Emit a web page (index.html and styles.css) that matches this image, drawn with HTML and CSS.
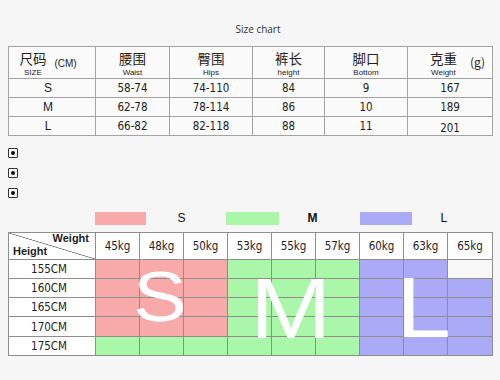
FILE: index.html
```html
<!DOCTYPE html>
<html lang="zh">
<head>
<meta charset="utf-8">
<title>Size chart</title>
<link rel="stylesheet" href="styles.css">
</head>
<body>
<div class="page">
  <div class="title">Size chart</div>

  <div class="size-table">
    <div class="cell head first">
      <div class="stack"><span class="zh">尺码</span><span class="en">SIZE</span></div>
      <span class="unit">(CM)</span>
    </div>
    <div class="cell head"><div class="stack"><span class="zh">腰围</span><span class="en">Waist</span></div></div>
    <div class="cell head"><div class="stack"><span class="zh">臀围</span><span class="en">Hips</span></div></div>
    <div class="cell head"><div class="stack"><span class="zh">裤长</span><span class="en">height</span></div></div>
    <div class="cell head"><div class="stack"><span class="zh">脚口</span><span class="en">Bottom</span></div></div>
    <div class="cell head last">
      <div class="stack"><span class="zh">克重</span><span class="en">Weight</span></div>
      <span class="unit">(g)</span>
    </div>

    <div class="cell size">S</div><div class="cell">58-74</div><div class="cell">74-110</div><div class="cell">84</div><div class="cell">9</div><div class="cell">167</div>
    <div class="cell size">M</div><div class="cell">62-78</div><div class="cell">78-114</div><div class="cell">86</div><div class="cell">10</div><div class="cell">189</div>
    <div class="cell size">L</div><div class="cell">66-82</div><div class="cell">82-118</div><div class="cell">88</div><div class="cell">11</div><div class="cell low">201</div>
  </div>

  <div class="marks">
    <span class="mark"></span>
    <span class="mark"></span>
    <span class="mark"></span>
  </div>

  <div class="legend">
    <span class="swatch pink"></span><span class="lab lab-s">S</span>
    <span class="swatch green w53"></span><span class="lab lab-m">M</span>
    <span class="swatch blue w52"></span><span class="lab lab-l">L</span>
  </div>

  <div class="chart">
    <div class="c corner"><span class="wt">Weight</span><span class="ht">Height</span></div>
    <div class="c hd">45kg</div><div class="c hd">48kg</div><div class="c hd">50kg</div>
    <div class="c hd">53kg</div><div class="c hd">55kg</div><div class="c hd">57kg</div>
    <div class="c hd">60kg</div><div class="c hd">63kg</div><div class="c hd">65kg</div>

    <div class="c rl">155CM</div>
    <div class="c p"></div><div class="c p"></div><div class="c p"></div>
    <div class="c g"></div><div class="c g"></div><div class="c g"></div>
    <div class="c b"></div><div class="c b"></div><div class="c e"></div>

    <div class="c rl">160CM</div>
    <div class="c p"></div><div class="c p"></div><div class="c p"></div>
    <div class="c g"></div><div class="c g"></div><div class="c g"></div>
    <div class="c b"></div><div class="c b"></div><div class="c b"></div>

    <div class="c rl">165CM</div>
    <div class="c p"></div><div class="c p"></div><div class="c p"></div>
    <div class="c g"></div><div class="c g"></div><div class="c g"></div>
    <div class="c b"></div><div class="c b"></div><div class="c b"></div>

    <div class="c rl">170CM</div>
    <div class="c p"></div><div class="c p"></div><div class="c p"></div>
    <div class="c g"></div><div class="c g"></div><div class="c g"></div>
    <div class="c b"></div><div class="c b"></div><div class="c b"></div>

    <div class="c rl">175CM</div>
    <div class="c g"></div><div class="c g"></div><div class="c g"></div>
    <div class="c g"></div><div class="c g"></div><div class="c g"></div>
    <div class="c b"></div><div class="c b"></div><div class="c b"></div>

    <span class="big big-s">S</span>
    <span class="big big-m">M</span>
    <span class="big big-l">L</span>
  </div>
</div>
</body>
</html>
```

FILE: styles.css
```css
* { box-sizing: border-box; }

body {
  margin: 0;
  width: 500px;
  height: 380px;
  overflow: hidden;
  background: #f6f6f6;
  color: #222;
  font-family: "DejaVu Sans Condensed", "Liberation Sans", sans-serif;
}

.page {
  padding: 21px 8px 0;
}

.title {
  height: 16px;
  line-height: 16px;
  padding-left: 16px;
  text-align: center;
  font-family: "Open Sans", "Liberation Sans", sans-serif;
  font-size: 10px;
  color: #333;
}

/* ---------- size table ---------- */
.size-table {
  margin-top: 9px;
  width: 485px;
  display: grid;
  grid-template-columns: 86px 73px 82px 71px 82px 84px;
  grid-template-rows: 31px 18px 18px 18px;
  gap: 1px;
  padding: 1px;
  background: #a3a3a3;
}

.cell {
  background: #fbfbfb;
  display: flex;
  align-items: center;
  justify-content: center;
  font-size: 11.5px;
  line-height: 14px;
}

.cell.size { padding-right: 8px; font-family: "Liberation Sans", sans-serif; font-size: 12px; }
.cell.low { padding-top: 4px; }

.stack {
  display: flex;
  flex-direction: column;
  align-items: center;
}

.zh {
  font-family: "Noto Sans CJK SC", sans-serif;
  font-size: 13.5px;
  line-height: normal;
  color: #222;
}

.en {
  font-family: "Liberation Sans", sans-serif;
  font-size: 8px;
  line-height: normal;
  color: #222;
}

.head.first { gap: 8px; padding-right: 8px; }
.head.first .unit {
  font-family: "Liberation Sans", sans-serif;
  font-size: 10px;
  margin-top: 2px;
}

.head.last { justify-content: flex-end; gap: 13px; padding-right: 7px; }
.head.last .unit {
  font-family: "Noto Sans CJK SC", sans-serif;
  font-size: 12px;
  margin-top: -2px;
}

/* ---------- marks ---------- */
.marks {
  margin-top: 12px;
  display: flex;
  flex-direction: column;
  gap: 10px;
}

.mark {
  width: 10px;
  height: 10px;
  border: 1px solid #333;
  border-radius: 1px;
  display: flex;
  align-items: center;
  justify-content: center;
}

.mark::after {
  content: "";
  width: 4px;
  height: 4px;
  border-radius: 50%;
  background: #111;
}

/* ---------- legend ---------- */
.legend {
  margin-top: 14px;
  height: 13px;
  display: flex;
  padding-left: 87px;
  font-family: "Liberation Sans", sans-serif;
  font-size: 12px;
  line-height: 13px;
  color: #111;
}

.swatch { width: 51px; height: 13px; }
.swatch.w53 { width: 53px; }
.swatch.w52 { width: 52px; }
.pink { background: #f8aaab; }
.green { background: #aaf7a9; }
.blue { background: #aaaaf6; }

.lab { width: 81px; }
.lab-s { padding-left: 32px; }
.lab-m { width: 82px; padding-left: 29px; font-weight: bold; }
.lab-l { padding-left: 29px; }

/* ---------- chart ---------- */
.chart {
  position: relative;
  margin-top: 7px;
  width: 485px;
  display: grid;
  grid-template-columns: 86px repeat(8, 43px) 44px;
  grid-template-rows: 26px 18px 18px 18px 19px 18px;
  gap: 1px;
  padding: 1px;
  background: #8e8e8e;
}

.c {
  display: flex;
  align-items: center;
  justify-content: center;
  font-size: 11.5px;
}

.hd, .rl { background: #fff; }
.rl { padding-right: 6px; }
.p { background: #f8aaab; }
.g { background: #aaf7a9; }
.b { background: #aaaaf6; }
.e { background: #f8f8f8; }

.corner {
  background: #fff linear-gradient(to top right, transparent calc(50% - 0.7px), #666 50%, transparent calc(50% + 0.7px));
  flex-direction: column;
  align-items: stretch;
  justify-content: space-between;
  font-family: "Liberation Sans", sans-serif;
  font-weight: bold;
  font-size: 11px;
  line-height: 12px;
  padding: 0 6px 2px 4px;
}

.wt { text-align: right; margin-top: -1px; }
.ht { text-align: left; }

.big {
  position: absolute;
  font-family: "Liberation Sans", sans-serif;
  color: #fff;
  line-height: 1;
  transform: scaleX(1.15);
  transform-origin: left top;
}

.big-s { font-size: 70px; left: 125px; top: 30px; }
.big-m { font-size: 85px; left: 242px; top: 34px; }
.big-l { font-size: 86px; left: 388px; top: 32px; }
```
